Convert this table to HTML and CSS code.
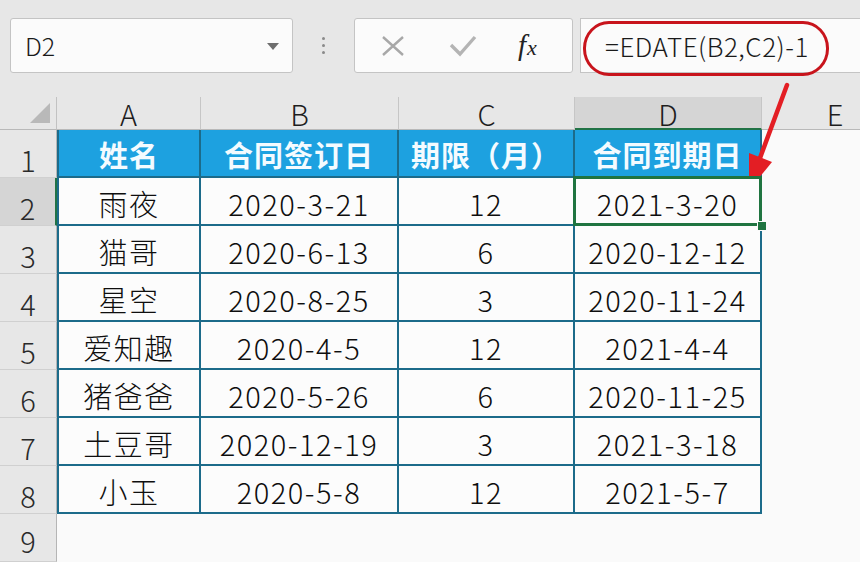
FILE: index.html
```html
<!DOCTYPE html>
<html lang="zh-CN">
<head>
<meta charset="utf-8">
<title>EDATE</title>
<link rel="stylesheet" href="styles.css">
</head>
<body>
<div class="app">
  <div class="toolbar">
    <div class="namebox">
      <span class="name">D2</span>
      <svg class="dd" width="12" height="7" viewBox="0 0 12 7"><path d="M0 0H12L6 7Z" fill="#6e6e6e"/></svg>
    </div>
    <div class="dots"><i></i><i></i><i></i></div>
    <div class="btns">
      <svg class="ico" width="24" height="20" viewBox="0 0 24 20"><path d="M2 1L22 19M22 1L2 19" stroke="#a8a8a8" stroke-width="2.4" fill="none"/></svg>
      <svg class="ico" width="28" height="22" viewBox="0 0 28 22"><path d="M2 10L11 19L26 2" stroke="#b4b4b4" stroke-width="3.4" fill="none" stroke-linejoin="miter"/></svg>
      <span class="fx"><span class="f">f</span><span class="x">x</span></span>
    </div>
    <div class="formula">
      <span class="ftext">=EDATE(B2,C2)-1</span>
      <div class="ring"></div>
    </div>
  </div>

  <div class="sheet">
    <div class="corner"><span class="tri"></span></div>
    <div class="colh">A</div>
    <div class="colh">B</div>
    <div class="colh">C</div>
    <div class="colh sel">D</div>
    <div class="colh last">E</div>

    <div class="rowh">1</div>
    <div class="c th first">姓名</div>
    <div class="c th">合同签订日</div>
    <div class="c th">期限（月）</div>
    <div class="c th">合同到期日</div>
    <div class="blank"></div>

    <div class="rowh sel">2</div>
    <div class="c first">雨夜</div>
    <div class="c">2020-3-21</div>
    <div class="c">12</div>
    <div class="c active">2021-3-20<span class="handle"></span></div>
    <div class="blank"></div>

    <div class="rowh">3</div>
    <div class="c first">猫哥</div>
    <div class="c">2020-6-13</div>
    <div class="c">6</div>
    <div class="c">2020-12-12</div>
    <div class="blank"></div>

    <div class="rowh">4</div>
    <div class="c first">星空</div>
    <div class="c">2020-8-25</div>
    <div class="c">3</div>
    <div class="c">2020-11-24</div>
    <div class="blank"></div>

    <div class="rowh">5</div>
    <div class="c first">爱知趣</div>
    <div class="c">2020-4-5</div>
    <div class="c">12</div>
    <div class="c">2021-4-4</div>
    <div class="blank"></div>

    <div class="rowh">6</div>
    <div class="c first">猪爸爸</div>
    <div class="c">2020-5-26</div>
    <div class="c">6</div>
    <div class="c">2020-11-25</div>
    <div class="blank"></div>

    <div class="rowh">7</div>
    <div class="c first">土豆哥</div>
    <div class="c">2020-12-19</div>
    <div class="c">3</div>
    <div class="c">2021-3-18</div>
    <div class="blank"></div>

    <div class="rowh">8</div>
    <div class="c first">小玉</div>
    <div class="c">2020-5-8</div>
    <div class="c">12</div>
    <div class="c">2021-5-7</div>
    <div class="blank"></div>

    <div class="rowh last">9</div>
    <div class="blank wide"></div>
  </div>

  <svg class="arrow" width="860" height="562" viewBox="0 0 860 562">
    <path d="M787 85L760 158" stroke="#e31e24" stroke-width="4.5" fill="none" stroke-linecap="round"/>
    <path d="M749 190L772 162L749 153Z" fill="#e31e24"/>
  </svg>
</div>
</body>
</html>
```

FILE: styles.css
```css
* { box-sizing: border-box; }
html, body { margin: 0; padding: 0; }
body {
  width: 860px;
  height: 562px;
  overflow: hidden;
  background: #fafafa;
  font-family: "Noto Sans CJK SC", "Noto Sans", sans-serif;
  color: #141414;
}
.app { position: relative; width: 860px; height: 562px; overflow: hidden; }

.toolbar {
  height: 97px;
  background: #e7e7e7;
  display: flex;
  align-items: flex-start;
  padding: 18px 0 0 10px;
}
.namebox {
  width: 283px;
  height: 55px;
  background: #fbfbfb;
  border: 1px solid #c4c4c4;
  border-radius: 3px;
  display: flex;
  align-items: center;
  justify-content: space-between;
  padding: 0 13px 0 14px;
  flex: none;
}
.name { font-size: 25px; line-height: 1; color: #1a1a1a; font-weight: 300; }
.dd { margin-top: 2px; }
.dots {
  width: 61px;
  height: 55px;
  flex: none;
  display: flex;
  flex-direction: column;
  align-items: center;
  justify-content: center;
  gap: 4px;
}
.dots i { width: 3px; height: 3px; background: #8a8a8a; border-radius: 50%; display: block; }
.btns {
  width: 219px;
  height: 55px;
  flex: none;
  background: #fbfbfb;
  border: 1px solid #c4c4c4;
  border-radius: 3px;
  display: flex;
  align-items: center;
  padding: 0 0 0 26px;
  gap: 44px;
}
.ico { display: block; }
.fx { font-family: "Liberation Serif", serif; font-style: italic; color: #222; line-height: 1; display: flex; align-items: baseline; margin-left: -3px; }
.fx .f { font-size: 29px; }
.fx .x { font-size: 22px; margin-left: 1px; }

.formula {
  position: relative;
  flex: 1;
  height: 55px;
  margin-left: 7px;
  background: #fbfbfb;
  border: 1px solid #c4c4c4;
  border-right: none;
  display: flex;
  align-items: center;
  padding-left: 24px;
}
.ftext { font-size: 26px; line-height: 1; color: #1a1a1a; font-weight: 300; letter-spacing: 0.5px; }
.ring {
  position: absolute;
  left: 2px;
  top: 2px;
  width: 246px;
  height: 55px;
  border: 3px solid #c8141c;
  border-radius: 26px / 27px;
}

.sheet {
  display: grid;
  grid-template-columns: 57px 144px 198px 176px 187px 146px;
  grid-template-rows: 33px repeat(9, 48px);
}
.corner {
  background: #e7e7e7;
  border-right: 1px solid #c2c2c2;
  border-bottom: 1px solid #b9b9b9;
  position: relative;
}
.tri {
  position: absolute;
  left: 30px;
  top: 6px;
  width: 20px;
  height: 20px;
  background: #b9b9b9;
  clip-path: polygon(100% 0, 100% 100%, 0 100%);
}
.colh {
  background: #e7e7e7;
  border-right: 1px solid #c6c6c6;
  border-bottom: 1px solid #b9b9b9;
  display: flex;
  align-items: center;
  justify-content: center;
  font-size: 29px;
  font-weight: 300;
  line-height: 1;
  color: #1e1e1e;
  padding-top: 1px;
}
.colh.sel { background: #d5d5d5; border-bottom: 2px solid #217346; }
.colh.last { border-right: none; }

.rowh {
  background: #e7e7e7;
  border-right: 1px solid #b5b5b5;
  border-bottom: 1px solid #d0d0d0;
  display: flex;
  align-items: flex-end;
  justify-content: center;
  font-size: 29px;
  font-weight: 300;
  line-height: 28px;
  padding-bottom: 4px;
  color: #2a2a2a;
}
.rowh.last { padding-bottom: 7px; }
.rowh.sel { background: #d5d5d5; border-right: 2px solid #217346; }

.c {
  background: #fcfcfc;
  border-right: 2px solid #1c6b8a;
  border-bottom: 2px solid #1c6b8a;
  display: flex;
  align-items: center;
  justify-content: center;
  font-size: 29px;
  font-weight: 300;
  line-height: 1;
  padding-top: 4px;
  color: #0e0e0e;
  letter-spacing: 1.5px;
  position: relative;
}
.c.first { border-left: 2px solid #1c6b8a; }
.c.th {
  background: #1da1e0;
  color: #f4fbff;
  font-weight: bold;
  letter-spacing: 1px;
  padding-top: 2px;
}
.c.active { z-index: 1; }
.c.active::after {
  content: "";
  position: absolute;
  left: -2px;
  top: -2px;
  right: -2px;
  bottom: -2px;
  border: 3px solid #1f7440;
}
.handle {
  position: absolute;
  right: -7px;
  bottom: -7px;
  width: 10px;
  height: 10px;
  background: #1f7440;
  border: 1px solid #fafafa;
  z-index: 2;
}
.blank { background: #fafafa; }
.blank.wide { grid-column: 2 / 7; }

.arrow { position: absolute; left: 0; top: 0; pointer-events: none; }
```
